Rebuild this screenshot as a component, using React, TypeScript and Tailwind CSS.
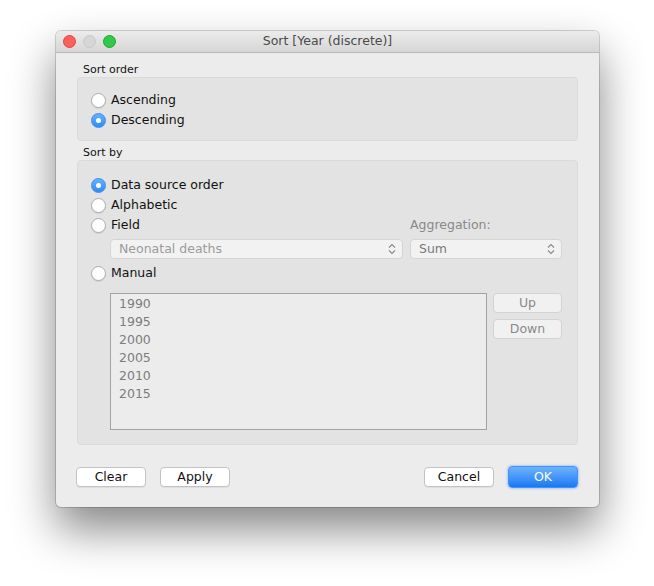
import React from "react";

const FONT = { fontFamily: '"DejaVu Sans", "Liberation Sans", sans-serif' };

function Radio({ checked, label }: { checked?: boolean; label: string }) {
  return (
    <div className="flex h-[20px] items-center gap-[5px]">
      {checked ? (
        <span className="flex h-[15px] w-[15px] items-center justify-center rounded-full border border-[#3a8ef0] bg-gradient-to-b from-[#66b1fb] to-[#2f8bf5]">
          <span className="h-[5px] w-[5px] rounded-full bg-white" />
        </span>
      ) : (
        <span className="h-[15px] w-[15px] rounded-full border border-[#acacac] bg-white shadow-[0_1px_1px_rgba(0,0,0,0.08)]" />
      )}
      <span className="text-[12.5px] text-[#111]">{label}</span>
    </div>
  );
}

function Chevrons() {
  return (
    <svg width="8" height="12" viewBox="0 0 8 12" fill="none" stroke="#8c8c8c" strokeWidth="1.2">
      <path d="M1 4.5 L4 1.5 L7 4.5" />
      <path d="M1 7.5 L4 10.5 L7 7.5" />
    </svg>
  );
}

function Select({ value, width, tone }: { value: string; width: string; tone: string }) {
  return (
    <div
      className={`flex h-[20px] ${width} items-center justify-between rounded-[4px] border border-[#d4d4d4] bg-[#f2f2f2] pl-[8px] pr-[6px]`}
    >
      <span className={`text-[12.5px] ${tone}`}>{value}</span>
      <Chevrons />
    </div>
  );
}

function Button({ label, disabled }: { label: string; disabled?: boolean }) {
  return (
    <div
      className={
        disabled
          ? "flex h-[20px] w-[69px] items-center justify-center rounded-[4px] border border-[#d3d3d3] bg-[#f1f1f1] text-[12.5px] text-[#8a8a8a]"
          : "flex h-[20px] w-[70px] items-center justify-center rounded-[4px] border border-[#c3c3c3] bg-white text-[12.5px] text-[#111] shadow-[0_1px_0_rgba(0,0,0,0.06)]"
      }
    >
      {label}
    </div>
  );
}

export default function App() {
  const years = ["1990", "1995", "2000", "2005", "2010", "2015"];
  return (
    <div className="min-h-[586px] bg-white pl-[56px] pt-[31px]" style={FONT}>
      <div className="w-[543px] overflow-hidden rounded-[5px] bg-[#ececec] shadow-[0_22px_45px_rgba(0,0,0,0.48),0_0_0_1px_rgba(0,0,0,0.16)]">
        {/* title bar */}
        <div className="relative flex h-[22px] items-center justify-center border-b border-[#b9b9b9] bg-gradient-to-b from-[#ececec] to-[#d6d6d6]">
          <div className="absolute left-[7px] top-[4px] flex gap-[7px]">
            <span className="h-[13px] w-[13px] rounded-full border border-[#e0443e] bg-[#fc605c]" />
            <span className="h-[13px] w-[13px] rounded-full border border-[#c8c8c8] bg-[#d6d6d6]" />
            <span className="h-[13px] w-[13px] rounded-full border border-[#1aab29] bg-[#34c84a]" />
          </div>
          <span className="text-[12.5px] text-[#4a4a4a]">Sort [Year (discrete)]</span>
        </div>

        <div className="px-[21px] pb-[19px]">
          {/* sort order */}
          <div className="mt-[10px] pl-[6px] text-[11px] leading-[14px] text-[#111]">Sort order</div>
          <div className="rounded-[4px] border border-[#dadada] bg-[#e3e3e3] pb-[10px] pl-[13px] pt-[12px]">
            <Radio label="Ascending" />
            <Radio label="Descending" checked />
          </div>

          {/* sort by */}
          <div className="mt-[5px] pl-[6px] text-[11px] leading-[14px] text-[#111]">Sort by</div>
          <div className="rounded-[4px] border border-[#dadada] bg-[#e3e3e3] pb-[14px] pl-[13px] pr-[15px] pt-[14px]">
            <Radio label="Data source order" checked />
            <Radio label="Alphabetic" />
            <div className="grid grid-cols-[312px_152px] gap-x-[7px]">
              <Radio label="Field" />
              <div className="flex h-[20px] items-center text-[12.5px] text-[#888]">Aggregation:</div>
              <div className="mt-[4px] pl-[19px]">
                <Select value="Neonatal deaths" width="w-[293px]" tone="text-[#9b9b9b]" />
              </div>
              <div className="mt-[4px]">
                <Select value="Sum" width="w-[152px]" tone="text-[#7a7a7a]" />
              </div>
            </div>
            <div className="mt-[4px]">
              <Radio label="Manual" />
            </div>
            <div className="mt-[10px] flex gap-[6px] pl-[19px]">
              <div className="h-[137px] w-[377px] border border-[#a3a3a3] bg-[#ececec] pl-[8px] pt-[1px]">
                {years.map((y) => (
                  <div key={y} className="text-[12.5px] leading-[18px] text-[#7c7c7c]">
                    {y}
                  </div>
                ))}
              </div>
              <div className="flex flex-col gap-[6px]">
                <Button label="Up" disabled />
                <Button label="Down" disabled />
              </div>
            </div>
          </div>

          {/* footer */}
          <div className="mt-[21px] flex items-center justify-between">
            <div className="-ml-[1px] flex gap-[14px]">
              <Button label="Clear" />
              <Button label="Apply" />
            </div>
            <div className="flex items-center gap-[14px]">
              <Button label="Cancel" />
              <div className="flex h-[22px] w-[70px] items-center justify-center rounded-[4px] border border-[#4a90ee] bg-gradient-to-b from-[#6db3fb] to-[#1578f3] text-[12.5px] text-white shadow-[0_0_2px_1px_rgba(90,160,250,0.45)]">
                OK
              </div>
            </div>
          </div>
        </div>
      </div>
    </div>
  );
}
